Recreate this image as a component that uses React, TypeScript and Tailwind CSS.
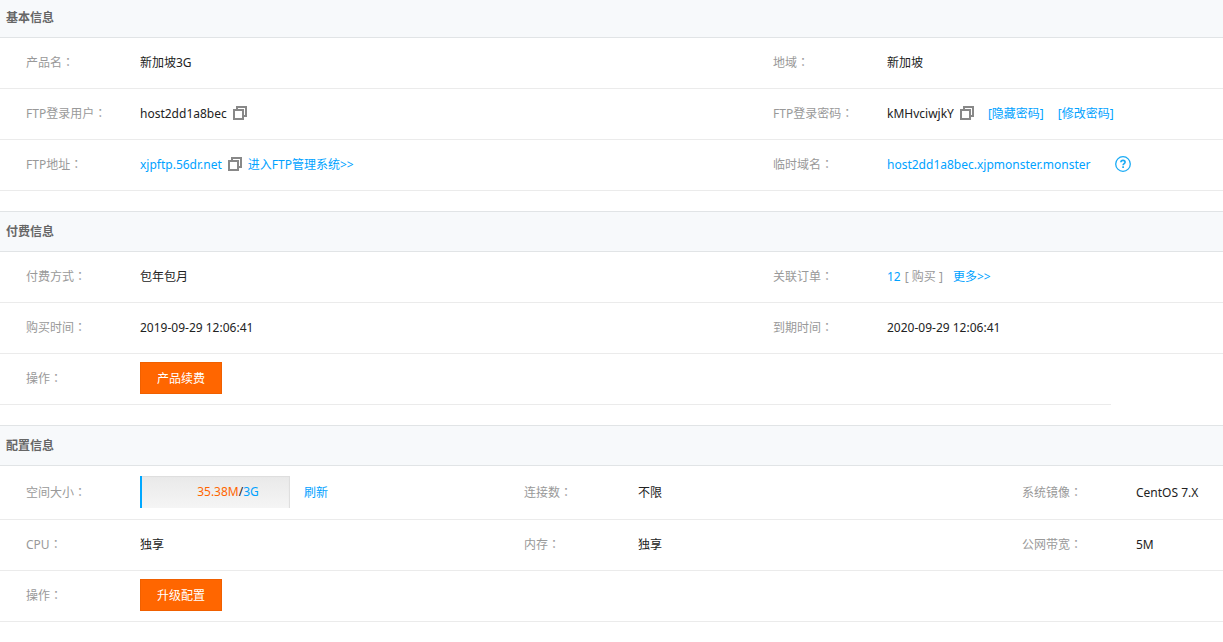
import clsx from 'clsx';
import React from 'react';

type SectionProps = {
	title: string;
	first?: boolean;
	children: React.ReactNode;
};

const Section: React.FC<SectionProps> = ({ title, first, children }) => (
	<section className="mb-5">
		<h2
			className={clsx(
				'border-b border-[#e1e4e6] bg-[#f7f9fb] px-1.5 font-bold text-[#666]',
				first ? 'pt-2 pb-[9px]' : 'border-t pt-2.5 pb-[9px]'
			)}
		>
			{title}
		</h2>
		{children}
	</section>
);

type RowProps = {
	cols: 'one' | 'two' | 'three';
	className?: string;
	children: React.ReactNode;
};

const Row: React.FC<RowProps> = ({ cols, className = 'min-h-[51px]', children }) => (
	<dl
		className={clsx(
			'grid items-center border-b border-[#ebebeb]',
			cols === 'one' && 'grid-cols-1',
			cols === 'two' && 'grid-cols-[747fr_476fr]',
			cols === 'three' && 'grid-cols-[498fr_498fr_227fr]',
			className
		)}
	>
		{children}
	</dl>
);

const Item: React.FC<{ label: string; children: React.ReactNode }> = ({ label, children }) => (
	<div className="flex min-w-0 items-center pl-[26px]">
		<dt className="w-[114px] shrink-0 text-[#999]">
			{label}
			<span className="font-['Noto_Sans_CJK_TC',sans-serif] leading-none">：</span>
		</dt>
		<dd className="flex items-center whitespace-nowrap">{children}</dd>
	</div>
);

const TextLink: React.FC<{ className?: string; children: React.ReactNode }> = ({ className, children }) => (
	<a href="#" className={clsx('text-[#00a2ff] hover:underline', className)}>
		{children}
	</a>
);

const CopyButton: React.FC<{ label: string }> = ({ label }) => (
	<button type="button" aria-label={label} className="mx-1.5 mb-0.5 cursor-pointer">
		<svg width="14" height="14" viewBox="0 0 14 14" fill="none" stroke="#888" strokeWidth="2" className="block">
			<path d="M4 3V1h9v9h-2" />
			<path d="M1 4h9v9H1z" />
		</svg>
	</button>
);

const ActionButton: React.FC<{ children: React.ReactNode }> = ({ children }) => (
	<button type="button" className="mb-0.5 h-8 cursor-pointer border border-[#f06000] bg-[#ff6600] px-4 pt-px text-white">
		{children}
	</button>
);

const App: React.FC = () => {
	return (
		<main className="bg-white font-['Noto_Sans','Noto_Sans_CJK_SC',sans-serif] text-xs leading-5 text-[#222]">
			<Section title="基本信息" first>
				<Row cols="two">
					<Item label="产品名">新加坡3G</Item>
					<Item label="地域">新加坡</Item>
				</Row>
				<Row cols="two">
					<Item label="FTP登录用户">
						host2dd1a8bec
						<CopyButton label="复制用户" />
					</Item>
					<Item label="FTP登录密码">
						kMHvciwjkY
						<CopyButton label="复制密码" />
						<TextLink className="ml-2">[隐藏密码]</TextLink>
						<TextLink className="ml-3.5">[修改密码]</TextLink>
					</Item>
				</Row>
				<Row cols="two">
					<Item label="FTP地址">
						<TextLink>xjpftp.56dr.net</TextLink>
						<CopyButton label="复制地址" />
						<TextLink>进入FTP管理系统&gt;&gt;</TextLink>
					</Item>
					<Item label="临时域名">
						<TextLink>host2dd1a8bec.xjpmonster.monster</TextLink>
						<button type="button" aria-label="帮助" className="mb-0.5 ml-6 cursor-pointer">
							<svg width="16" height="16" viewBox="0 0 16 16" fill="none" stroke="#1aabf5" className="block">
								<circle cx="8" cy="8" r="7.3" strokeWidth="1.3" />
								<path d="M5.9 6.3c0-1.2.9-1.9 2.1-1.9s2.1.7 2.1 1.8c0 1.4-2 1.5-2 3.1" strokeWidth="1.6" />
								<path d="M8.1 10.3v1.7" strokeWidth="1.7" />
							</svg>
						</button>
					</Item>
				</Row>
			</Section>

			<Section title="付费信息">
				<Row cols="two">
					<Item label="付费方式">包年包月</Item>
					<Item label="关联订单">
						<TextLink>12</TextLink>
						<span className="ml-1 text-[#999]">[ 购买 ]</span>
						<TextLink className="ml-2.5">更多&gt;&gt;</TextLink>
					</Item>
				</Row>
				<Row cols="two">
					<Item label="购买时间">2019-09-29 12:06:41</Item>
					<Item label="到期时间">2020-09-29 12:06:41</Item>
				</Row>
				<Row cols="one" className="mr-28 min-h-[51px]">
					<Item label="操作">
						<ActionButton>产品续费</ActionButton>
					</Item>
				</Row>
			</Section>

			<Section title="配置信息">
				<Row cols="three" className="min-h-[54px]">
					<Item label="空间大小">
						<div className="mb-0.5 flex h-8 w-[150px] items-center justify-center border-l-2 border-[#00a8ff] bg-linear-to-b from-[#e9e9e9] to-[#f5f5f5] pl-6 shadow-[inset_-1px_1px_1px_#ddd]">
							<span className="text-[#ff6600]">35.38M</span>/<span className="text-[#00a2ff]">3G</span>
						</div>
						<TextLink className="ml-3.5">刷新</TextLink>
					</Item>
					<Item label="连接数">不限</Item>
					<Item label="系统镜像">CentOS 7.X</Item>
				</Row>
				<Row cols="three">
					<Item label="CPU">独享</Item>
					<Item label="内存">独享</Item>
					<Item label="公网带宽">5M</Item>
				</Row>
				<Row cols="one">
					<Item label="操作">
						<ActionButton>升级配置</ActionButton>
					</Item>
				</Row>
			</Section>
		</main>
	);
};

export default App;
